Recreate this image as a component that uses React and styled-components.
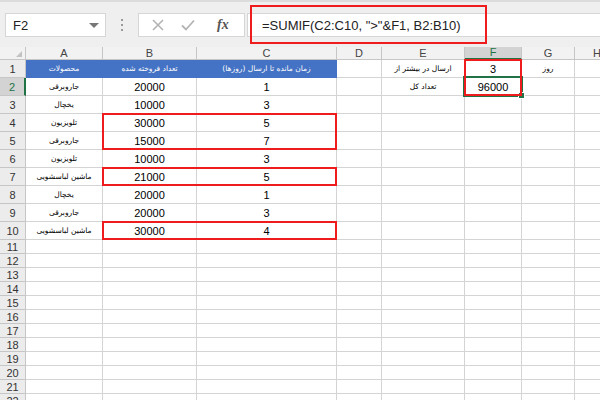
import React from "react";
import styled, { createGlobalStyle } from "styled-components";

const GlobalStyle = createGlobalStyle`
  html, body {
    margin: 0;
    padding: 0;
    background: #ffffff;
  }
  * {
    box-sizing: border-box;
  }
`;

const COLS = [26, 77, 94, 140, 45, 83, 57, 53, 45, 100];
const LETTERS = ["A", "B", "C", "D", "E", "F", "G", "H"];
const FA = "'DejaVu Sans', 'Noto Sans', sans-serif";
const LATIN = "'Liberation Sans', Arial, sans-serif";

const products = [
  ["جاروبرقی", "20000", "1"],
  ["یخچال", "10000", "3"],
  ["تلویزیون", "30000", "5"],
  ["جاروبرقی", "15000", "7"],
  ["تلویزیون", "10000", "3"],
  ["ماشین لباسشویی", "21000", "5"],
  ["یخچال", "20000", "1"],
  ["جاروبرقی", "20000", "3"],
  ["ماشین لباسشویی", "30000", "4"],
];

const Page = styled.div`
  width: 600px;
  height: 400px;
  overflow: hidden;
  display: flex;
  flex-direction: column;
  font-family: ${LATIN};
  background: #fff;
`;

const Toolbar = styled.div`
  height: 47px;
  flex: none;
  background: #efefef;
  border-top: 2px solid #dcdcdc;
  display: flex;
  align-items: flex-start;
  padding-top: 11px;
  padding-left: 5px;
`;

const NameBox = styled.div`
  width: 101px;
  height: 24px;
  background: #fff;
  border: 1px solid #d6d6d6;
  display: flex;
  align-items: center;
  justify-content: space-between;
  padding: 0 6px 0 7px;
  font-size: 13px;
  color: #222;
`;

const Caret = styled.span`
  width: 0;
  height: 0;
  border-left: 5px solid transparent;
  border-right: 5px solid transparent;
  border-top: 5px solid #777;
`;

const Dots = styled.div`
  width: 32px;
  height: 24px;
  display: flex;
  flex-direction: column;
  align-items: center;
  justify-content: center;
  gap: 3px;

  span {
    width: 2px;
    height: 2px;
    background: #9a9a9a;
  }
`;

const FxBox = styled.div`
  width: 107px;
  height: 24px;
  background: #fff;
  border: 1px solid #d6d6d6;
  display: flex;
  align-items: center;
  padding-left: 12px;
  gap: 15px;
`;

const FxLabel = styled.span`
  font-family: "Liberation Serif", serif;
  font-style: italic;
  font-weight: bold;
  font-size: 14px;
  color: #555;
  margin-left: 6px;
`;

const FormulaBox = styled.div`
  position: relative;
  flex: 1;
  height: 24px;
  margin-left: 2px;
  background: #fff;
  border: 1px solid #d6d6d6;
  border-right: none;
  display: flex;
  align-items: center;
  padding-left: 14px;
  font-size: 13px;
  color: #222;
  white-space: pre;
`;

const FormulaMark = styled.div`
  position: absolute;
  left: 2px;
  top: -9px;
  width: 237px;
  height: 39px;
  border: 2px solid #ee1c1c;
  pointer-events: none;
`;

const Sheet = styled.div`
  position: relative;
  display: grid;
  grid-template-columns: ${COLS.map((c) => c + "px").join(" ")};
  grid-template-rows: 13px repeat(10, 18px) repeat(12, 14px);
`;

const Corner = styled.div`
  grid-row: 1;
  grid-column: 1;
  background: #f2f2f2;
  border-right: 1px solid #c6c6c6;
  border-bottom: 1px solid #c6c6c6;
  position: relative;

  &::after {
    content: "";
    position: absolute;
    right: 3px;
    bottom: 2px;
    border-left: 6px solid transparent;
    border-bottom: 6px solid #c2c2c2;
  }
`;

const ColHead = styled.div`
  grid-row: 1;
  grid-column: ${(p) => p.$col};
  background: ${(p) => (p.$active ? "#d3d3d3" : "#f2f2f2")};
  color: ${(p) => (p.$active ? "#217346" : "#444")};
  border-right: 1px solid #c6c6c6;
  border-bottom: ${(p) => (p.$active ? "2px solid #217346" : "1px solid #c6c6c6")};
  font-size: 11px;
  display: flex;
  align-items: center;
  justify-content: center;
  line-height: 1;
`;

const RowHead = styled.div`
  grid-column: 1;
  grid-row: ${(p) => p.$row};
  background: ${(p) => (p.$active ? "#d3d3d3" : "#ececec")};
  color: ${(p) => (p.$active ? "#217346" : "#333")};
  border-bottom: 1px solid #c6c6c6;
  border-right: ${(p) => (p.$active ? "2px solid #217346" : "1px solid #c6c6c6")};
  font-size: 11px;
  display: flex;
  align-items: center;
  justify-content: center;
`;

const Cell = styled.div`
  grid-row: ${(p) => p.$row};
  grid-column: ${(p) => p.$col};
  background: ${(p) => (p.$head ? "#4472c4" : "#fff")};
  color: ${(p) => (p.$head ? "#fff" : "#000")};
  border-right: 1px solid ${(p) => (p.$head ? "#4472c4" : "#d4d4d4")};
  border-bottom: 1px solid ${(p) => (p.$head ? "#4472c4" : "#d4d4d4")};
  font-family: ${(p) => (p.$fa ? FA : LATIN)};
  font-size: ${(p) => (p.$fa ? "7.5px" : "11px")};
  display: flex;
  align-items: center;
  justify-content: center;
  white-space: nowrap;
  direction: ${(p) => (p.$fa ? "rtl" : "ltr")};
`;

const RedBox = styled.div`
  grid-row: ${(p) => p.$rows};
  grid-column: ${(p) => p.$cols};
  margin: -1px 0 0 -1px;
  border: 2px solid #ee1c1c;
  z-index: 3;
  pointer-events: none;
`;

const Selection = styled.div`
  grid-row: 3;
  grid-column: 7;
  margin: -2px -1px -1px -2px;
  border: 2px solid #217346;
  z-index: 2;
  position: relative;

  &::after {
    content: "";
    position: absolute;
    right: -4px;
    bottom: -4px;
    width: 5px;
    height: 5px;
    background: #217346;
    border: 1px solid #fff;
  }
`;

function XIcon() {
  return (
    <svg width="14" height="14" viewBox="0 0 14 14">
      <path d="M2 2 L12 12 M12 2 L2 12" stroke="#b4b4b4" strokeWidth="1.6" fill="none" />
    </svg>
  );
}

function CheckIcon() {
  return (
    <svg width="16" height="14" viewBox="0 0 16 14">
      <path d="M2 7.5 L6 11.5 L14 2.5" stroke="#b4b4b4" strokeWidth="1.8" fill="none" />
    </svg>
  );
}

export default function App() {
  const cells = [];
  const totalRows = 22;

  for (let r = 1; r <= totalRows; r++) {
    const gr = r + 1;
    cells.push(
      <RowHead key={"rh" + r} $row={gr} $active={r === 2}>
        {r}
      </RowHead>
    );
    for (let c = 2; c <= 10; c++) {
      let text = "";
      let fa = false;
      let head = false;
      if (r === 1 && c <= 4) {
        head = true;
        fa = true;
        text = ["محصولات", "تعداد فروخته شده", "زمان مانده تا ارسال (روزها)"][c - 2];
      } else if (r >= 2 && r <= 10 && c <= 4) {
        const row = products[r - 2];
        text = row[c - 2];
        fa = c === 2;
      } else if (c === 6 && r === 1) {
        text = "ارسال در بیشتر از";
        fa = true;
      } else if (c === 6 && r === 2) {
        text = "تعداد کل";
        fa = true;
      } else if (c === 7 && r === 1) {
        text = "3";
      } else if (c === 7 && r === 2) {
        text = "96000";
      } else if (c === 8 && r === 1) {
        text = "روز";
        fa = true;
      }
      cells.push(
        <Cell key={r + "-" + c} $row={gr} $col={c} $fa={fa} $head={head}>
          {text}
        </Cell>
      );
    }
  }

  return (
    <Page>
      <GlobalStyle />
      <Toolbar>
        <NameBox>
          F2
          <Caret />
        </NameBox>
        <Dots>
          <span />
          <span />
          <span />
        </Dots>
        <FxBox>
          <XIcon />
          <CheckIcon />
          <FxLabel>fx</FxLabel>
        </FxBox>
        <FormulaBox>
          {'=SUMIF(C2:C10, ">"&F1, B2:B10)'}
          <FormulaMark />
        </FormulaBox>
      </Toolbar>
      <Sheet>
        <Corner />
        {LETTERS.map((l, i) => (
          <ColHead key={l} $col={i + 2} $active={l === "F"}>
            {l}
          </ColHead>
        ))}
        <ColHead $col={10} />
        {cells}
        <Selection />
        <RedBox $rows="5 / 7" $cols="3 / 5" />
        <RedBox $rows="8 / 9" $cols="3 / 5" />
        <RedBox $rows="11 / 12" $cols="3 / 5" />
        <RedBox $rows="2 / 4" $cols="7 / 8" />
      </Sheet>
    </Page>
  );
}
